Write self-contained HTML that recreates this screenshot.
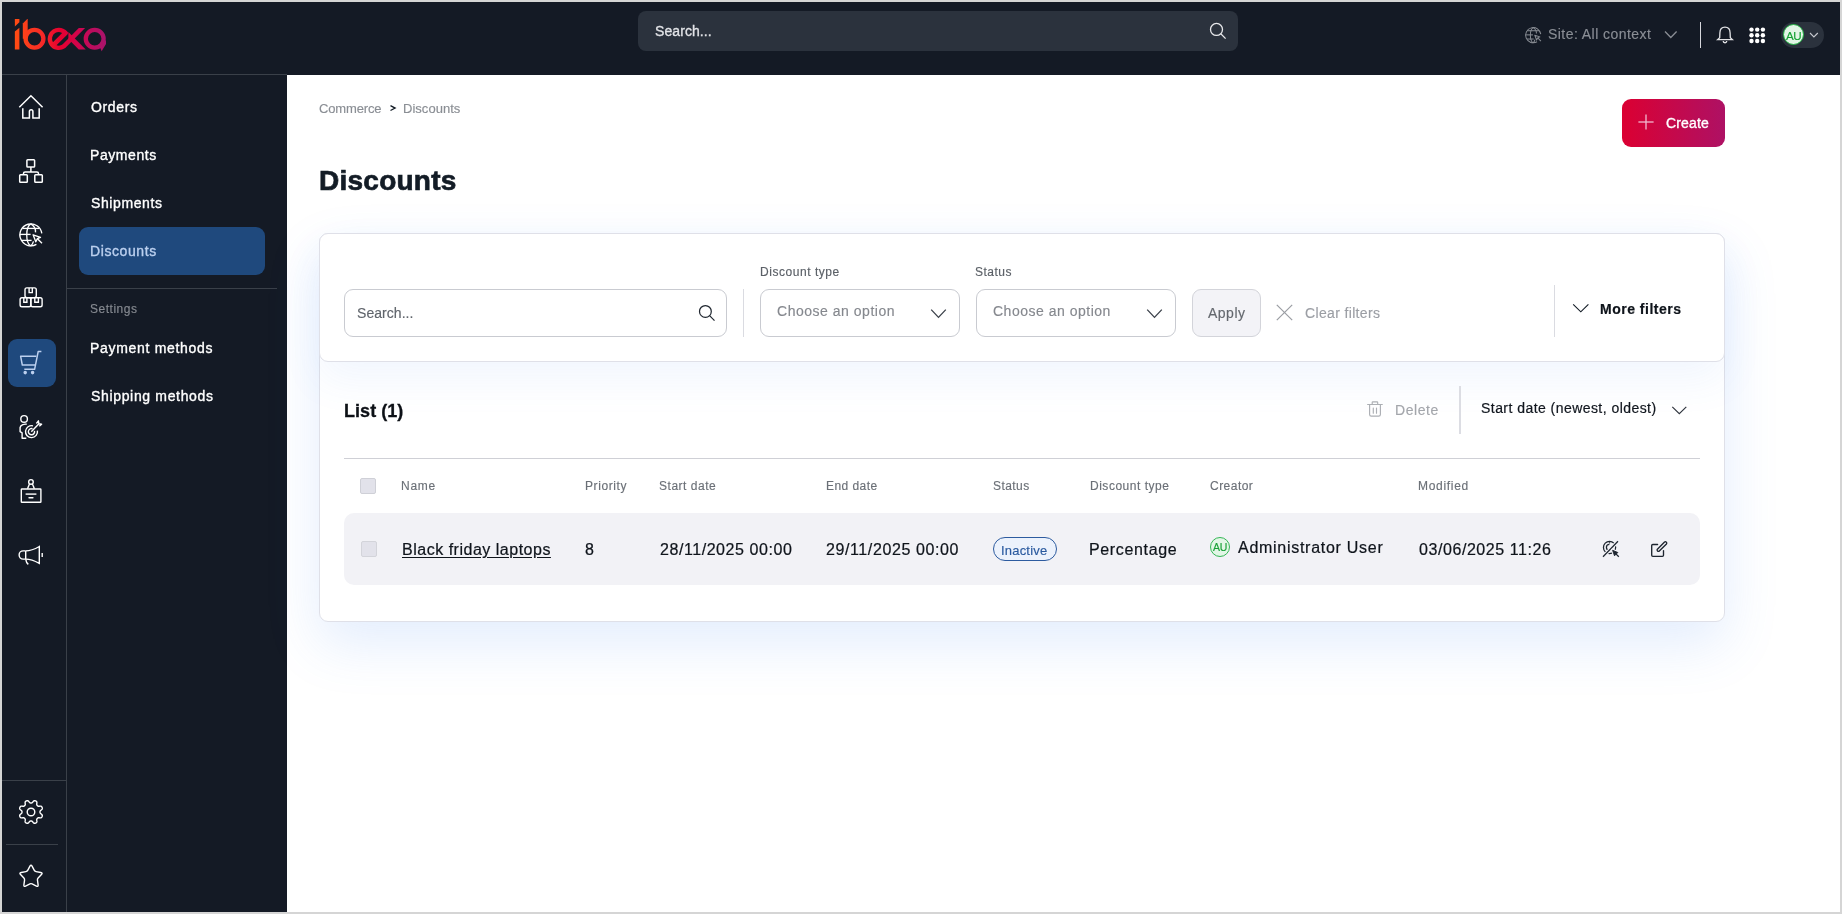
<!DOCTYPE html>
<html><head><meta charset="utf-8">
<style>
*{box-sizing:border-box;margin:0;padding:0}
html,body{width:1842px;height:914px;overflow:hidden;background:#d5d5d5;font-family:"Liberation Sans",sans-serif;font-variant-ligatures:none}
#clip{position:absolute;left:2px;top:2px;width:1838px;height:910px;overflow:hidden;background:#fff}
#L{position:absolute;left:-2px;top:-2px;width:1842px;height:914px}
.a{position:absolute}
.t{position:absolute;white-space:pre;line-height:1;will-change:transform}
svg{position:absolute;overflow:visible}
.dk{background:#141a25}
.sb{font-size:14px;font-weight:400;color:#fff;-webkit-text-stroke:.35px currentColor;letter-spacing:.62px}
.rg{letter-spacing:.45px}
</style></head><body>
<div id="clip"><div id="L">
<!-- ============ HEADER ============ -->
<div class="a dk" style="left:0;top:0;width:1842px;height:75px"></div>
<div class="a dk" style="left:0;top:75px;width:287px;height:839px"></div>
<div class="a" style="left:0;top:74px;width:287px;height:1px;background:#3a4049"></div>
<div class="a" style="left:66px;top:75px;width:1px;height:839px;background:#3a4049"></div>
<svg style="left:0;top:0" width="120" height="60" viewBox="0 0 120 60">
 <defs><linearGradient id="lg" gradientUnits="userSpaceOnUse" x1="14" y1="0" x2="106" y2="0">
  <stop offset="0" stop-color="#ff4c12"/><stop offset=".3" stop-color="#f82b27"/><stop offset=".5" stop-color="#e6002f"/><stop offset=".72" stop-color="#cf0550"/><stop offset="1" stop-color="#a8146c"/></linearGradient></defs>
 <g fill="url(#lg)" stroke="none">
  <polygon points="14.85,19 19.4,19 19.4,22.2 14.85,26.6"/>
  <polygon points="14.85,31.4 19.4,27.8 19.4,49.5 14.85,49.5"/>
  <polygon points="22.8,23.6 27.2,19 27.7,19 27.7,38.7 22.8,38.7"/>
 </g>
 <g fill="none" stroke="url(#lg)" stroke-width="4.3">
  <circle cx="34.5" cy="38.7" r="8.9"/>
  <path d="M66.4 33.95 A9 9 0 1 0 63.75 46.4"/>
  <line x1="51.6" y1="46.9" x2="66.5" y2="32.0" stroke-width="4.6"/>
  <circle cx="94.7" cy="38.8" r="8.9"/>
 </g>
 <g fill="url(#lg)">
  <polygon points="78.8,28.1 85.1,28.1 65.3,48 59,48"/>
  <polygon points="68.4,32.1 85.75,49.45 78.75,49.45 68.4,39.1"/>
  <polygon points="99.5,46 106,40 106,44 101.6,51.2"/>
 </g>
</svg>
<div class="a" style="left:638px;top:11px;width:600px;height:40px;border-radius:8px;background:#2b323d"></div>
<div id="t0" class="t" style="left:654.74px;top:24.20px;font-size:14px;color:#e3e4e8;font-weight:400;letter-spacing:0.08px;-webkit-text-stroke:.3px #e3e4e8">Search...</div>
<svg style="left:1209px;top:22px" width="18" height="18" viewBox="0 0 18 18" fill="none" stroke="#e6e7ea" stroke-width="1.3"><circle cx="7.5" cy="7.45" r="6.0"/><line x1="11.8" y1="11.8" x2="16.6" y2="16.6"/></svg>
<svg style="left:1524.6px;top:26.8px" width="16.6" height="16.6" viewBox="19 223 24 24" fill="none" stroke="#8a8e95" stroke-width="1.45">
 <path d="M41.8 233.4 A11 11 0 1 0 36.4 244.4"/>
 <path d="M30.76 223.9 C25.4 227.2, 25.4 242.6, 30.76 245.9"/>
 <path d="M30.76 223.9 C34.4 226, 35.7 229.4, 35.5 232.4"/>
 <path d="M33.5 241.4 C32.9 243.4, 32 245, 30.76 245.9"/>
 <line x1="22.4" y1="228.4" x2="39.2" y2="228.4"/>
 <line x1="19.9" y1="234.4" x2="30.6" y2="234.4"/>
 <line x1="22" y1="240.4" x2="31.6" y2="240.4"/>
 <path d="M33.1 234.8 L40.5 237.3 L37.3 238.7 L35.8 241.8 Z" stroke-linejoin="round"/>
 <line x1="37.4" y1="238.7" x2="42" y2="243.3"/>
</svg>
<div id="t1" class="t" style="left:1547.89px;top:26.90px;font-size:14px;color:#8a8e95;letter-spacing:0.45px;-webkit-text-stroke:0.15px #8a8e95">Site: All context</div>
<svg style="left:1664px;top:30px" width="14" height="9" viewBox="0 0 14 9" fill="none" stroke="#8a8e95" stroke-width="1.3"><polyline points="1,1.5 6.8,7.5 12.6,1.5"/></svg>
<div class="a" style="left:1700px;top:22px;width:1.4px;height:26px;background:#d6d7dc"></div>
<svg style="left:1716px;top:26px" width="18" height="18" viewBox="0 0 18 18" fill="none" stroke="#e2e3e6" stroke-width="1.3"><path d="M1.6 13.6 L3.7 11.6 L3.9 6.8 C4 3.3 6 1.2 9 1.2 C12 1.2 14 3.3 14.1 6.8 L14.3 11.6 L16.4 13.6 Z"/><path d="M7.2 15 A1.75 1.75 0 0 0 10.7 15"/></svg>
<svg style="left:1747.75px;top:25.65px" width="18" height="18" viewBox="0 0 18 18" fill="#fff"><circle cx="3.5" cy="3.6" r="2.2"/><circle cx="9.2" cy="3.6" r="2.2"/><circle cx="14.9" cy="3.6" r="2.2"/><circle cx="3.5" cy="9.3" r="2.2"/><circle cx="9.2" cy="9.3" r="2.2"/><circle cx="14.9" cy="9.3" r="2.2"/><circle cx="3.5" cy="15" r="2.2"/><circle cx="9.2" cy="15" r="2.2"/><circle cx="14.9" cy="15" r="2.2"/></svg>
<div class="a" style="left:1781px;top:22px;width:43px;height:26px;border-radius:13px;background:#2b323d"></div>
<div class="a" style="left:1783.4px;top:24.2px;width:21px;height:21px;border-radius:50%;background:#e2f5e6;border:1.5px solid #22b443"></div>
<div id="t2" class="t" style="left:1786.4px;top:30.1px;font-size:11.6px;color:#14a133;font-weight:400;letter-spacing:-0.45px;-webkit-text-stroke:.15px #14a133">AU</div>
<svg style="left:1809px;top:32px" width="10" height="7" viewBox="0 0 10 7" fill="none" stroke="#c8cad0" stroke-width="1.1"><polyline points="1,1 4.9,4.9 8.8,1"/></svg>
<div class="a" style="left:8px;top:339px;width:48px;height:48px;border-radius:9px;background:#1f497d"></div>
<svg style="left:0;top:0" width="70" height="914" viewBox="0 0 70 914" fill="none" stroke="#fff" stroke-width="1.5" stroke-linejoin="miter">
 <!-- home -->
 <polyline points="19.3,107.2 30.93,95.7 42.6,107.2"/>
 <path d="M22.8 108.2 V117.9 H29.4 V111.4 A1.75 1.75 0 0 1 32.9 111.4 V117.9 H39.2 V108.2"/>
 <!-- sitemap -->
 <rect x="26.9" y="159.7" width="7.7" height="7.4" rx="0.8"/>
 <rect x="19.7" y="174.8" width="7.6" height="7.5" rx="0.8"/>
 <rect x="34.8" y="174.8" width="7.5" height="7.5" rx="0.8"/>
 <line x1="30.9" y1="167.1" x2="30.9" y2="172"/>
 <path d="M23.5 174.8 V173.6 Q23.5 172 25.1 172 H36.9 Q38.5 172 38.5 173.6 V174.8"/>
 <!-- globe -->
 <g stroke-width="1.35">
 <path d="M41.8 233.4 A11 11 0 1 0 36.4 244.4"/>
 <path d="M30.76 223.9 C25.4 227.2, 25.4 242.6, 30.76 245.9"/>
 <path d="M30.76 223.9 C34.4 226, 35.7 229.4, 35.5 232.4"/>
 <path d="M33.5 241.4 C32.9 243.4, 32 245, 30.76 245.9"/>
 <line x1="22.4" y1="228.4" x2="39.2" y2="228.4"/>
 <line x1="19.9" y1="234.4" x2="30.6" y2="234.4"/>
 <line x1="22" y1="240.4" x2="31.6" y2="240.4"/>
 <path d="M33.1 234.8 L40.5 237.3 L37.3 238.7 L35.8 241.8 Z" stroke-linejoin="round"/>
 <line x1="37.4" y1="238.7" x2="42" y2="243.3"/>
 </g>
 <!-- boxes -->
 <g stroke-width="1.4">
 <rect x="25" y="287.9" width="11.3" height="9.7" rx="1.8"/>
 <rect x="20.1" y="297.7" width="10.7" height="9.1" rx="1.8"/>
 <rect x="30.9" y="297.7" width="11.2" height="9.1" rx="1.8"/>
 <polyline points="29.1,287.9 29.1,292.6 32.3,292.6 32.3,287.9"/>
 <polyline points="23.8,297.7 23.8,302.3 26.9,302.3 26.9,297.7"/>
 <polyline points="34.8,297.7 34.8,302.3 38.4,302.3 38.4,297.7"/>
 </g>
 <!-- cart -->
 <g stroke="#bcd0ef" stroke-width="1.45" stroke-linejoin="round">
 <polyline points="36.3,356.2 20.6,356.2 22.3,365 35.3,365"/>
 <polyline points="41.4,351.5 38.2,351.5 34.6,369.3 24.3,369.3"/>
 <circle cx="25.2" cy="372.6" r="1.05" fill="#bcd0ef"/>
 <circle cx="32.6" cy="372.6" r="1.05" fill="#bcd0ef"/>
 </g>
 <!-- person target -->
 <g stroke-width="1.4" stroke-linejoin="round">
 <circle cx="24.1" cy="418.9" r="3.3"/>
 <path d="M26.7 424.3 C24.6 423.9, 20.7 424.3, 20.1 427.5 L20.1 431.7 L22.1 432.9 L22.1 438.3 L26.3 438.3"/>
 <path d="M33.0 425.85 A6 6 0 1 0 37.4 430.6"/>
 <path d="M32.5 428.75 A3.1 3.1 0 1 0 34.45 430.85"/>
 <line x1="31.3" y1="431.8" x2="38.9" y2="423.8"/>
 <polyline points="36.4,423.5 38.4,420.8 38.9,423.8 41.6,424.2 39.3,426.3"/>
 </g>
 <!-- signboard -->
 <g stroke-width="1.4">
 <circle cx="30.95" cy="481.9" r="2.3"/>
 <polyline points="29.6,483.8 27.5,488.8"/>
 <polyline points="32.3,483.8 34.4,488.8"/>
 <rect x="21.3" y="489" width="19.6" height="13.3" rx="0.6"/>
 <line x1="25.6" y1="494.1" x2="36.4" y2="494.1"/>
 <line x1="29" y1="497.8" x2="32.9" y2="497.8" stroke-linecap="round"/>
 </g>
 <!-- megaphone -->
 <g stroke-width="1.4">
 <path d="M25.7 550.9 C30.2 550.9, 35 549, 39.3 546.5 L39.3 563.4 C35 561, 30.2 559.1, 25.7 559.1"/>
 <path d="M25.7 550.9 L23.2 550.9 A4.1 4.1 0 0 0 23.2 559.1 L25.7 559.1"/>
 <line x1="25.7" y1="550.9" x2="25.7" y2="559.1"/>
 <path d="M25.7 559.1 C26 561.4, 26.9 563.2, 28.3 564.4"/>
 <line x1="42.2" y1="553.1" x2="42.2" y2="556.9"/>
 </g>
</svg>
<div class="a" style="left:2px;top:780px;width:64px;height:1px;background:#3a4049"></div>
<div class="a" style="left:6px;top:844px;width:52px;height:1px;background:#3a4049"></div>
<svg style="left:0;top:780px" width="70" height="130" viewBox="0 780 70 130" fill="none" stroke="#fff" stroke-width="1.4" stroke-linejoin="round">
 <path d="M31.00 803.00 L31.12 803.00 L31.24 802.99 L31.35 802.99 L31.47 802.97 L31.59 802.96 L31.71 802.93 L31.84 802.89 L31.96 802.84 L32.09 802.76 L32.23 802.66 L32.37 802.53 L32.53 802.37 L32.69 802.17 L32.86 801.94 L33.05 801.70 L33.24 801.47 L33.43 801.25 L33.63 801.07 L33.81 800.92 L34.00 800.81 L34.18 800.74 L34.35 800.70 L34.51 800.68 L34.68 800.68 L34.84 800.70 L34.99 800.72 L35.15 800.76 L35.30 800.81 L35.45 800.86 L35.59 800.91 L35.74 800.98 L35.88 801.05 L36.02 801.12 L36.15 801.20 L36.28 801.30 L36.40 801.40 L36.52 801.51 L36.62 801.64 L36.72 801.79 L36.79 801.97 L36.84 802.18 L36.88 802.41 L36.88 802.68 L36.87 802.97 L36.83 803.27 L36.79 803.57 L36.76 803.85 L36.73 804.11 L36.73 804.33 L36.73 804.53 L36.76 804.69 L36.80 804.84 L36.85 804.97 L36.91 805.08 L36.98 805.19 L37.05 805.28 L37.12 805.38 L37.20 805.47 L37.28 805.55 L37.36 805.64 L37.45 805.72 L37.53 805.80 L37.62 805.88 L37.72 805.95 L37.81 806.02 L37.92 806.09 L38.03 806.15 L38.16 806.20 L38.31 806.24 L38.47 806.27 L38.67 806.27 L38.89 806.27 L39.15 806.24 L39.43 806.21 L39.73 806.17 L40.03 806.13 L40.32 806.12 L40.59 806.12 L40.82 806.16 L41.03 806.21 L41.21 806.28 L41.36 806.38 L41.49 806.48 L41.60 806.60 L41.70 806.72 L41.80 806.85 L41.88 806.98 L41.95 807.12 L42.02 807.26 L42.09 807.41 L42.14 807.55 L42.19 807.70 L42.24 807.85 L42.28 808.01 L42.30 808.16 L42.32 808.32 L42.32 808.49 L42.30 808.65 L42.26 808.82 L42.19 809.00 L42.08 809.19 L41.93 809.37 L41.75 809.57 L41.53 809.76 L41.30 809.95 L41.06 810.14 L40.83 810.31 L40.63 810.47 L40.47 810.63 L40.34 810.77 L40.24 810.91 L40.16 811.04 L40.11 811.16 L40.07 811.29 L40.04 811.41 L40.03 811.53 L40.01 811.65 L40.01 811.76 L40.00 811.88 L40.00 812.00 L40.00 812.12 L40.01 812.24 L40.01 812.35 L40.03 812.47 L40.04 812.59 L40.07 812.71 L40.11 812.84 L40.16 812.96 L40.24 813.09 L40.34 813.23 L40.47 813.37 L40.63 813.53 L40.83 813.69 L41.06 813.86 L41.30 814.05 L41.53 814.24 L41.75 814.43 L41.93 814.63 L42.08 814.81 L42.19 815.00 L42.26 815.18 L42.30 815.35 L42.32 815.51 L42.32 815.68 L42.30 815.84 L42.28 815.99 L42.24 816.15 L42.19 816.30 L42.14 816.45 L42.09 816.59 L42.02 816.74 L41.95 816.88 L41.88 817.02 L41.80 817.15 L41.70 817.28 L41.60 817.40 L41.49 817.52 L41.36 817.62 L41.21 817.72 L41.03 817.79 L40.82 817.84 L40.59 817.88 L40.32 817.88 L40.03 817.87 L39.73 817.83 L39.43 817.79 L39.15 817.76 L38.89 817.73 L38.67 817.73 L38.47 817.73 L38.31 817.76 L38.16 817.80 L38.03 817.85 L37.92 817.91 L37.81 817.98 L37.72 818.05 L37.62 818.12 L37.53 818.20 L37.45 818.28 L37.36 818.36 L37.28 818.45 L37.20 818.53 L37.12 818.62 L37.05 818.72 L36.98 818.81 L36.91 818.92 L36.85 819.03 L36.80 819.16 L36.76 819.31 L36.73 819.47 L36.73 819.67 L36.73 819.89 L36.76 820.15 L36.79 820.43 L36.83 820.73 L36.87 821.03 L36.88 821.32 L36.88 821.59 L36.84 821.82 L36.79 822.03 L36.72 822.21 L36.62 822.36 L36.52 822.49 L36.40 822.60 L36.28 822.70 L36.15 822.80 L36.02 822.88 L35.88 822.95 L35.74 823.02 L35.59 823.09 L35.45 823.14 L35.30 823.19 L35.15 823.24 L34.99 823.28 L34.84 823.30 L34.68 823.32 L34.51 823.32 L34.35 823.30 L34.18 823.26 L34.00 823.19 L33.81 823.08 L33.63 822.93 L33.43 822.75 L33.24 822.53 L33.05 822.30 L32.86 822.06 L32.69 821.83 L32.53 821.63 L32.37 821.47 L32.23 821.34 L32.09 821.24 L31.96 821.16 L31.84 821.11 L31.71 821.07 L31.59 821.04 L31.47 821.03 L31.35 821.01 L31.24 821.01 L31.12 821.00 L31.00 821.00 L30.88 821.00 L30.76 821.01 L30.65 821.01 L30.53 821.03 L30.41 821.04 L30.29 821.07 L30.16 821.11 L30.04 821.16 L29.91 821.24 L29.77 821.34 L29.63 821.47 L29.47 821.63 L29.31 821.83 L29.14 822.06 L28.95 822.30 L28.76 822.53 L28.57 822.75 L28.37 822.93 L28.19 823.08 L28.00 823.19 L27.82 823.26 L27.65 823.30 L27.49 823.32 L27.32 823.32 L27.16 823.30 L27.01 823.28 L26.85 823.24 L26.70 823.19 L26.55 823.14 L26.41 823.09 L26.26 823.02 L26.12 822.95 L25.98 822.88 L25.85 822.80 L25.72 822.70 L25.60 822.60 L25.48 822.49 L25.38 822.36 L25.28 822.21 L25.21 822.03 L25.16 821.82 L25.12 821.59 L25.12 821.32 L25.13 821.03 L25.17 820.73 L25.21 820.43 L25.24 820.15 L25.27 819.89 L25.27 819.67 L25.27 819.47 L25.24 819.31 L25.20 819.16 L25.15 819.03 L25.09 818.92 L25.02 818.81 L24.95 818.72 L24.88 818.62 L24.80 818.53 L24.72 818.45 L24.64 818.36 L24.55 818.28 L24.47 818.20 L24.38 818.12 L24.28 818.05 L24.19 817.98 L24.08 817.91 L23.97 817.85 L23.84 817.80 L23.69 817.76 L23.53 817.73 L23.33 817.73 L23.11 817.73 L22.85 817.76 L22.57 817.79 L22.27 817.83 L21.97 817.87 L21.68 817.88 L21.41 817.88 L21.18 817.84 L20.97 817.79 L20.79 817.72 L20.64 817.62 L20.51 817.52 L20.40 817.40 L20.30 817.28 L20.20 817.15 L20.12 817.02 L20.05 816.88 L19.98 816.74 L19.91 816.59 L19.86 816.45 L19.81 816.30 L19.76 816.15 L19.72 815.99 L19.70 815.84 L19.68 815.68 L19.68 815.51 L19.70 815.35 L19.74 815.18 L19.81 815.00 L19.92 814.81 L20.07 814.63 L20.25 814.43 L20.47 814.24 L20.70 814.05 L20.94 813.86 L21.17 813.69 L21.37 813.53 L21.53 813.37 L21.66 813.23 L21.76 813.09 L21.84 812.96 L21.89 812.84 L21.93 812.71 L21.96 812.59 L21.97 812.47 L21.99 812.35 L21.99 812.24 L22.00 812.12 L22.00 812.00 L22.00 811.88 L21.99 811.76 L21.99 811.65 L21.97 811.53 L21.96 811.41 L21.93 811.29 L21.89 811.16 L21.84 811.04 L21.76 810.91 L21.66 810.77 L21.53 810.63 L21.37 810.47 L21.17 810.31 L20.94 810.14 L20.70 809.95 L20.47 809.76 L20.25 809.57 L20.07 809.37 L19.92 809.19 L19.81 809.00 L19.74 808.82 L19.70 808.65 L19.68 808.49 L19.68 808.32 L19.70 808.16 L19.72 808.01 L19.76 807.85 L19.81 807.70 L19.86 807.55 L19.91 807.41 L19.98 807.26 L20.05 807.12 L20.12 806.98 L20.20 806.85 L20.30 806.72 L20.40 806.60 L20.51 806.48 L20.64 806.38 L20.79 806.28 L20.97 806.21 L21.18 806.16 L21.41 806.12 L21.68 806.12 L21.97 806.13 L22.27 806.17 L22.57 806.21 L22.85 806.24 L23.11 806.27 L23.33 806.27 L23.53 806.27 L23.69 806.24 L23.84 806.20 L23.97 806.15 L24.08 806.09 L24.19 806.02 L24.28 805.95 L24.38 805.88 L24.47 805.80 L24.55 805.72 L24.64 805.64 L24.72 805.55 L24.80 805.47 L24.88 805.38 L24.95 805.28 L25.02 805.19 L25.09 805.08 L25.15 804.97 L25.20 804.84 L25.24 804.69 L25.27 804.53 L25.27 804.33 L25.27 804.11 L25.24 803.85 L25.21 803.57 L25.17 803.27 L25.13 802.97 L25.12 802.68 L25.12 802.41 L25.16 802.18 L25.21 801.97 L25.28 801.79 L25.38 801.64 L25.48 801.51 L25.60 801.40 L25.72 801.30 L25.85 801.20 L25.98 801.12 L26.12 801.05 L26.26 800.98 L26.41 800.91 L26.55 800.86 L26.70 800.81 L26.85 800.76 L27.01 800.72 L27.16 800.70 L27.32 800.68 L27.49 800.68 L27.65 800.70 L27.82 800.74 L28.00 800.81 L28.19 800.92 L28.37 801.07 L28.57 801.25 L28.76 801.47 L28.95 801.70 L29.14 801.94 L29.31 802.17 L29.47 802.37 L29.63 802.53 L29.77 802.66 L29.91 802.76 L30.04 802.84 L30.16 802.89 L30.29 802.93 L30.41 802.96 L30.53 802.97 L30.65 802.99 L30.76 802.99 L30.88 803.00 Z"/>
 <circle cx="31" cy="812" r="3.8"/>
 <path d="M29.96 866.14 Q31.00 864.20 32.04 866.14 L34.31 870.40 Q34.88 871.46 36.06 871.67 L40.82 872.52 Q42.98 872.91 41.46 874.49 L38.11 877.97 Q37.28 878.84 37.44 880.03 L38.10 884.81 Q38.41 886.99 36.43 886.03 L32.08 883.92 Q31.00 883.40 29.92 883.92 L25.57 886.03 Q23.59 886.99 23.90 884.81 L24.56 880.03 Q24.72 878.84 23.89 877.97 L20.54 874.49 Q19.02 872.91 21.18 872.52 L25.94 871.67 Q27.12 871.46 27.69 870.40 Z"/>
</svg>
<div id="t3" class="t sb" style="left:90.94px;top:100.35px;letter-spacing:0.65px">Orders</div>
<div id="t4" class="t sb" style="left:90.47px;top:148.35px;letter-spacing:0.58px">Payments</div>
<div id="t5" class="t sb" style="left:90.88px;top:196.35px;letter-spacing:0.60px">Shipments</div>
<div class="a" style="left:79px;top:227px;width:186px;height:48px;border-radius:9px;background:#1f497d"></div>
<div id="t6" class="t sb" style="left:90.46px;top:244.35px;color:#bcd0ef;letter-spacing:0.59px">Discounts</div>
<div class="a" style="left:67px;top:288px;width:210px;height:1px;background:#3a4049"></div>
<div id="t7" class="t" style="left:90.38px;top:302.80px;font-size:12px;color:#868a91;letter-spacing:0.51px;-webkit-text-stroke:0.15px #868a91">Settings</div>
<div id="t8" class="t sb" style="left:90.26px;top:341.35px;letter-spacing:0.69px">Payment methods</div>
<div id="t9" class="t sb" style="left:90.67px;top:389.35px;letter-spacing:0.66px">Shipping methods</div>
<div id="t10" class="t" style="left:318.67px;top:102.20px;font-size:13px;color:#8a8e94;letter-spacing:-0.16px;-webkit-text-stroke:0.15px #8a8e94">Commerce</div>
<svg style="left:389px;top:104px" width="8" height="10" viewBox="0 0 8 10" fill="none" stroke="#131c26" stroke-width="1.3"><polyline points="1.5,1.7 6.1,4.1 1.5,6.5"/></svg>
<div id="t11" class="t" style="left:403.40px;top:102.20px;font-size:13px;color:#8a8e94;letter-spacing:0.03px;-webkit-text-stroke:0.15px #8a8e94">Discounts</div>
<div id="t12" class="t" style="left:318.9px;top:167.30px;font-size:28px;font-weight:700;color:#131c26;letter-spacing:0.25px;-webkit-text-stroke:.7px #131c26">Discounts</div>
<div class="a" style="left:1622px;top:99px;width:103px;height:48px;border-radius:9px;background:linear-gradient(90deg,#db0032,#ae1164)"></div>
<svg style="left:1638px;top:114px" width="16" height="16" viewBox="0 0 16 16" stroke="#f2b9cf" stroke-width="1.3"><line x1="8" y1="0.4" x2="8" y2="15.6"/><line x1="0.4" y1="8" x2="15.6" y2="8"/></svg>
<div id="t13" class="t" style="left:1666.00px;top:116.15px;font-size:14px;color:#fff;-webkit-text-stroke:.35px #fff;letter-spacing:0.16px">Create</div>
<div class="a" style="left:319px;top:233px;width:1406px;height:389px;border-radius:9px;border:1px solid #dfe0e8;background:#fff;box-shadow:0 22px 54px 0 rgba(67,135,239,.15)"></div>
<div class="a" style="left:320px;top:234px;width:1404px;height:389px;border-radius:8px;overflow:hidden">
</div>
<div class="a" style="left:319px;top:233px;width:1406px;height:129px;border-radius:9px;border:1px solid #dfe0e8;background:#fff;box-shadow:0 18px 40px rgba(67,135,239,.075)"></div>
<!-- filters -->
<div class="a" style="left:344px;top:289px;width:383px;height:48px;border-radius:9px;border:1px solid #c9cbd1;background:#fff"></div>
<div id="t14" class="t" style="left:357.05px;top:306.25px;font-size:14px;color:#60656c;letter-spacing:0.05px;-webkit-text-stroke:0.15px #60656c">Search...</div>
<svg style="left:699px;top:305px" width="17" height="17" viewBox="0 0 17 17" fill="none" stroke="#1e252e" stroke-width="1.2"><circle cx="6.4" cy="6.45" r="5.9"/><line x1="10.6" y1="10.7" x2="15.5" y2="15.6"/></svg>
<div class="a" style="left:743px;top:289px;width:1px;height:48px;background:#dadbe1"></div>
<div id="t15" class="t" style="left:759.59px;top:265.85px;font-size:12px;color:#5b6067;letter-spacing:0.54px;-webkit-text-stroke:0.15px #5b6067">Discount type</div>
<div class="a" style="left:760px;top:289px;width:200px;height:48px;border-radius:9px;border:1px solid #c9cbd1;background:#fff"></div>
<div id="t16" class="t" style="left:776.70px;top:304.25px;font-size:14px;color:#85888e;letter-spacing:0.52px;-webkit-text-stroke:0.15px #85888e">Choose an option</div>
<svg style="left:930px;top:308px" width="17" height="11" viewBox="0 0 17 11" fill="none" stroke="#3b414a" stroke-width="1.3"><polyline points="1.2,1.6 8.5,9.4 15.8,1.6"/></svg>
<div id="t17" class="t" style="left:975.25px;top:265.85px;font-size:12px;color:#5b6067;letter-spacing:0.50px;-webkit-text-stroke:0.15px #5b6067">Status</div>
<div class="a" style="left:976px;top:289px;width:200px;height:48px;border-radius:9px;border:1px solid #c9cbd1;background:#fff"></div>
<div id="t18" class="t" style="left:992.70px;top:304.25px;font-size:14px;color:#85888e;letter-spacing:0.51px;-webkit-text-stroke:0.15px #85888e">Choose an option</div>
<svg style="left:1146px;top:308px" width="17" height="11" viewBox="0 0 17 11" fill="none" stroke="#3b414a" stroke-width="1.3"><polyline points="1.2,1.6 8.5,9.4 15.8,1.6"/></svg>
<div class="a" style="left:1192px;top:289px;width:69px;height:48px;border-radius:9px;border:1px solid #d3d4da;background:#f3f3f7"></div>
<div id="t19" class="t" style="left:1208.18px;top:305.80px;font-size:14px;color:#64686e;letter-spacing:0.50px;-webkit-text-stroke:0.15px #64686e">Apply</div>
<svg style="left:1276.4px;top:303.5px" width="17" height="17" viewBox="0 0 17 17" fill="none" stroke="#9a9da3" stroke-width="1.2"><line x1="0.8" y1="0.8" x2="16.2" y2="16.2"/><line x1="16.2" y1="0.8" x2="0.8" y2="16.2"/></svg>
<div id="t20" class="t" style="left:1305.16px;top:306.00px;font-size:14px;color:#9b9ea4;letter-spacing:0.35px;-webkit-text-stroke:0.15px #9b9ea4">Clear filters</div>
<div class="a" style="left:1554px;top:285px;width:1px;height:52px;background:#dadbe1"></div>
<svg style="left:1572px;top:303px" width="18" height="11" viewBox="0 0 18 11" fill="none" stroke="#131c26" stroke-width="1.15"><polyline points="1.2,1.4 8.8,8.8 16.4,1.4"/></svg>
<div id="t21" class="t" style="left:1600.3px;top:301.60px;font-size:14px;font-weight:700;color:#0f141b;letter-spacing:0.5px;-webkit-text-stroke:.2px #0f141b">More filters</div>
<div id="t22" class="t" style="left:344.0px;top:401.75px;font-size:18px;font-weight:700;color:#0d1117;letter-spacing:0.05px;-webkit-text-stroke:.3px #0d1117">List (1)</div>
<svg style="left:1367px;top:401px" width="17" height="17" viewBox="0 0 17 17" fill="none" stroke="#acafb4" stroke-width="1.15" stroke-linecap="round"><line x1="0.6" y1="3.45" x2="15.3" y2="3.45"/><path d="M5.2 3.45 V1.5 Q5.2 0.8 5.9 0.8 H10 Q10.7 0.8 10.7 1.5 V3.45"/><path d="M2.6 3.45 V13.4 Q2.6 15.1 4.3 15.1 H11.7 Q13.4 15.1 13.4 13.4 V3.45"/><line x1="6.3" y1="7.1" x2="6.3" y2="12.2"/><line x1="9.5" y1="7.1" x2="9.5" y2="12.2"/></svg>
<div id="t23" class="t" style="left:1394.89px;top:402.60px;font-size:14px;color:#a3a6ab;letter-spacing:0.57px;-webkit-text-stroke:0.15px #a3a6ab">Delete</div>
<div class="a" style="left:1459px;top:386px;width:2px;height:48px;background:#dcdde3"></div>
<div id="t24" class="t" style="left:1481.39px;top:400.90px;font-size:14px;color:#10161e;letter-spacing:0.45px;-webkit-text-stroke:0.20px #10161e">Start date (newest, oldest)</div>
<svg style="left:1671px;top:405px" width="17" height="11" viewBox="0 0 17 11" fill="none" stroke="#2f353e" stroke-width="1.15"><polyline points="1.3,1.8 8.3,8.7 15.3,1.8"/></svg>
<div class="a" style="left:344px;top:458px;width:1356px;height:1px;background:#cfd0d6"></div>
<!-- header row -->
<div class="a" style="left:360px;top:478px;width:16px;height:16px;border-radius:2px;border:1px solid #cfd0d7;background:#e2e2ea"></div>
<div id="t25" class="t" style="left:401.02px;top:479.85px;font-size:12px;color:#6b7077;letter-spacing:0.75px;-webkit-text-stroke:0.15px #6b7077">Name</div>
<div id="t26" class="t" style="left:584.72px;top:479.85px;font-size:12px;color:#6b7077;letter-spacing:0.60px;-webkit-text-stroke:0.15px #6b7077">Priority</div>
<div id="t27" class="t" style="left:659.39px;top:479.85px;font-size:12px;color:#6b7077;letter-spacing:0.52px;-webkit-text-stroke:0.15px #6b7077">Start date</div>
<div id="t28" class="t" style="left:826.30px;top:479.85px;font-size:12px;color:#6b7077;letter-spacing:0.45px;-webkit-text-stroke:0.15px #6b7077">End date</div>
<div id="t29" class="t" style="left:992.67px;top:479.85px;font-size:12px;color:#6b7077;letter-spacing:0.44px;-webkit-text-stroke:0.15px #6b7077">Status</div>
<div id="t30" class="t" style="left:1089.51px;top:479.85px;font-size:12px;color:#6b7077;letter-spacing:0.52px;-webkit-text-stroke:0.15px #6b7077">Discount type</div>
<div id="t31" class="t" style="left:1210.24px;top:479.85px;font-size:12px;color:#6b7077;letter-spacing:0.47px;-webkit-text-stroke:0.15px #6b7077">Creator</div>
<div id="t32" class="t" style="left:1418.37px;top:479.85px;font-size:12px;color:#6b7077;letter-spacing:0.70px;-webkit-text-stroke:0.15px #6b7077">Modified</div>
<!-- data row -->
<div class="a" style="left:344px;top:513px;width:1356px;height:72px;border-radius:10px;background:#f2f2f6"></div>
<div class="a" style="left:361px;top:541px;width:16px;height:16px;border-radius:2px;border:1px solid #d3d4da;background:#e2e2ea"></div>
<div id="t33" class="t" style="left:401.72px;top:541.75px;font-size:16px;color:#0f141b;letter-spacing:0.51px;text-decoration:underline;text-underline-offset:2px;-webkit-text-stroke:0.22px #0f141b">Black friday laptops</div>
<div id="t34" class="t" style="left:584.76px;top:541.75px;font-size:16px;color:#0f141b;letter-spacing:0.00px;-webkit-text-stroke:0.22px #0f141b">8</div>
<div id="t35" class="t" style="left:659.65px;top:541.75px;font-size:16px;color:#0f141b;letter-spacing:0.56px;-webkit-text-stroke:0.22px #0f141b">28/11/2025 00:00</div>
<div id="t36" class="t" style="left:826.43px;top:541.75px;font-size:16px;color:#0f141b;letter-spacing:0.60px;-webkit-text-stroke:0.22px #0f141b">29/11/2025 00:00</div>
<div class="a" style="left:993px;top:537px;width:64px;height:24px;border-radius:12px;border:1px solid #2d5b9f;background:#ecf2fc"></div>
<div id="t37" class="t" style="left:1001.44px;top:543.50px;font-size:13px;color:#2a5a9f;letter-spacing:0.20px;-webkit-text-stroke:0.15px #2a5a9f">Inactive</div>
<div id="t38" class="t" style="left:1089.07px;top:541.75px;font-size:16px;color:#0f141b;letter-spacing:0.65px;-webkit-text-stroke:0.22px #0f141b">Percentage</div>
<div class="a" style="left:1210px;top:537px;width:20px;height:20px;border-radius:50%;border:1px solid #35b655;background:#e2f6e6"></div>
<div id="t39" class="t" style="left:1213.2px;top:542.2px;font-size:10.5px;color:#17a036;letter-spacing:-0.3px;-webkit-text-stroke:.15px #17a036">AU</div>
<div id="t40" class="t" style="left:1238.18px;top:540.00px;font-size:16px;color:#0f141b;letter-spacing:0.72px;-webkit-text-stroke:0.22px #0f141b">Administrator User</div>
<div id="t41" class="t" style="left:1418.53px;top:541.75px;font-size:16px;color:#0f141b;letter-spacing:0.57px;-webkit-text-stroke:0.22px #0f141b">03/06/2025 11:26</div>
<svg style="left:1600px;top:538px" width="22" height="22" viewBox="0 0 22 22" fill="none" stroke="#1e252f" stroke-width="1.25">
 <circle cx="9.55" cy="9.4" r="6.1"/>
 <path d="M9.4 6.4 A3 3 0 1 0 12.4 9.6"/>
 <line x1="9.5" y1="4.2" x2="9.6" y2="5.4"/>
 <line x1="3" y1="18.7" x2="18" y2="3.3" stroke="#f2f2f6" stroke-width="3.4"/>
 <line x1="3" y1="18.7" x2="18" y2="3.3"/>
 <path d="M12.2 11.9 L18.6 14.5 L14.5 18.6 Z" fill="#f2f2f6" stroke="#f2f2f6" stroke-width="2.6" stroke-linejoin="round"/>
 <path d="M12.6 12.3 L17.8 14.5 L14.5 17.8 Z" fill="#1e252f" stroke-width="0.9" stroke-linejoin="round"/>
 <line x1="15.4" y1="15.4" x2="18.8" y2="18.8"/>
</svg>
<svg style="left:1650px;top:541px" width="20" height="20" viewBox="0 0 20 20" fill="none" stroke="#1e252f" stroke-width="1.35" stroke-linejoin="round" stroke-linecap="round">
 <path d="M7.6 3.5 H2.8 Q1.7 3.5 1.7 4.6 V14.2 Q1.7 15.3 2.8 15.3 H12.4 Q13.5 15.3 13.5 14.2 V9.6"/>
 <path d="M14.55 1.05 A1.35 1.35 0 0 1 16.45 2.95 L9.05 10.35 Q6.90 10.60 7.15 8.45 Z"/>
</svg>
</div></div>
</body></html>
